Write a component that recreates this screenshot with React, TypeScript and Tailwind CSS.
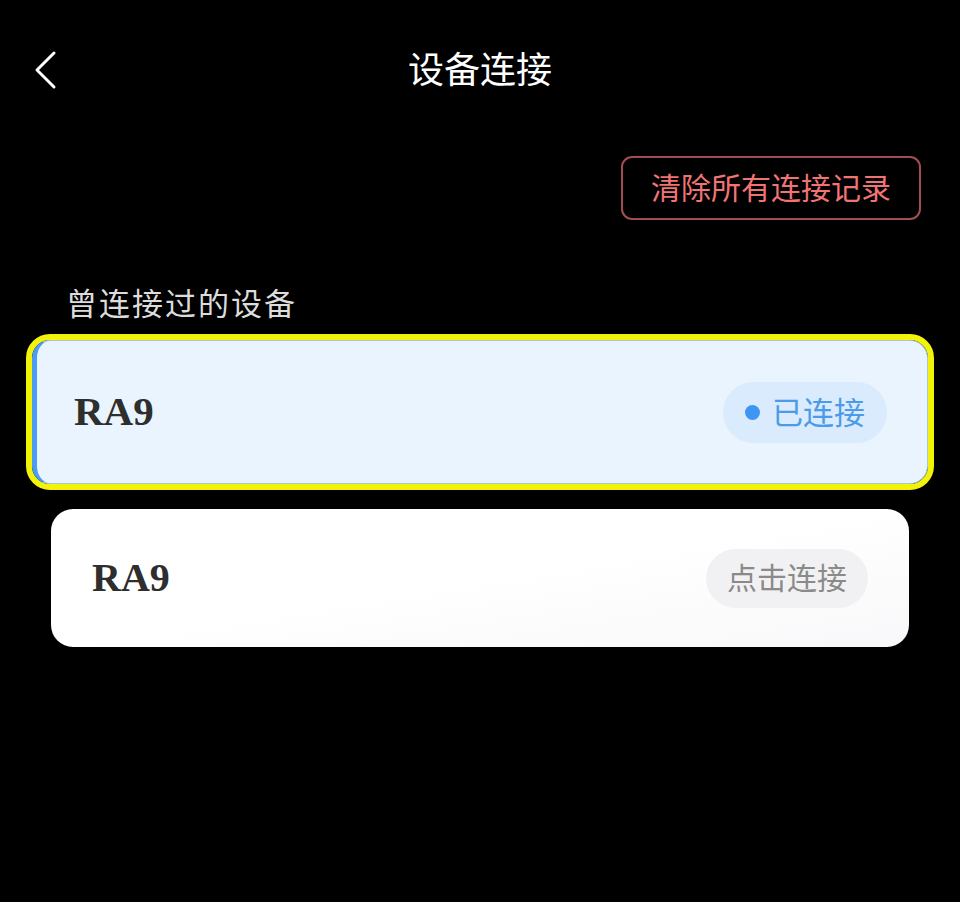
import React from 'react';

const cjk = { fontFamily: '"Noto Sans", "Noto Sans CJK SC", sans-serif' };
const serif = { fontFamily: '"Liberation Serif", "Times New Roman", serif' };

const BackIcon = () => (
  <svg width="28" height="40" viewBox="0 0 28 40" fill="none">
    <path d="M22 3 L5 20 L22 37" stroke="#ffffff" strokeWidth="3" strokeLinecap="round" strokeLinejoin="round" />
  </svg>
);

export default function App() {
  return (
    <div className="w-[960px] h-[902px] bg-black overflow-hidden" style={cjk}>
      <div className="flex items-center h-[140px] pl-[32px] pr-[32px]">
        <div className="w-[80px]">
          <BackIcon />
        </div>
        <div className="flex-1 text-center text-white text-[36px] leading-none">设备连接</div>
        <div className="w-[80px]" />
      </div>

      <div className="flex justify-end pt-[16px] pr-[39px]">
        <button className="h-[64px] w-[300px] border-2 border-[#a24d53] rounded-[11px] text-[#f07474] text-[30px] leading-none flex items-center justify-center">
          清除所有连接记录
        </button>
      </div>

      <div className="mt-[63px] pl-[66px] text-[#dcdcdc] text-[31px] tracking-[2px] leading-[40px]">曾连接过的设备</div>

      <div className="mt-[11px] px-[26px]">
        <div className="border-[6px] border-[#f2f20a] rounded-[24px]">
          <div className="h-[144px] bg-[#eaf4fe] rounded-[18px] border border-[#a9c8cf] border-l-[5px] border-l-[#4a9df3] flex items-center justify-between pl-[37px] pr-[40px]">
            <span className="text-[#2e2e2e] text-[41px] font-bold" style={serif}>RA9</span>
            <span className="h-[61px] pl-[22px] pr-[22px] rounded-full bg-[#d9ebfc] flex items-center gap-[12px]">
              <span className="w-[15px] h-[15px] rounded-full bg-[#3d96f2]" />
              <span className="text-[#4b9be8] text-[31px] leading-none">已连接</span>
            </span>
          </div>
        </div>
      </div>

      <div className="mt-[19px] px-[51px]">
        <div className="h-[138px] rounded-[22px] bg-gradient-to-br from-white via-white to-[#f8f8fa] flex items-center justify-between pl-[41px] pr-[41px]">
          <span className="text-[#2e2e2e] text-[40px] font-bold" style={serif}>RA9</span>
          <span className="h-[59px] px-[21px] rounded-full bg-[#f1f1f3] flex items-center">
            <span className="text-[#8a8a8a] text-[30px] leading-none">点击连接</span>
          </span>
        </div>
      </div>
    </div>
  );
}
